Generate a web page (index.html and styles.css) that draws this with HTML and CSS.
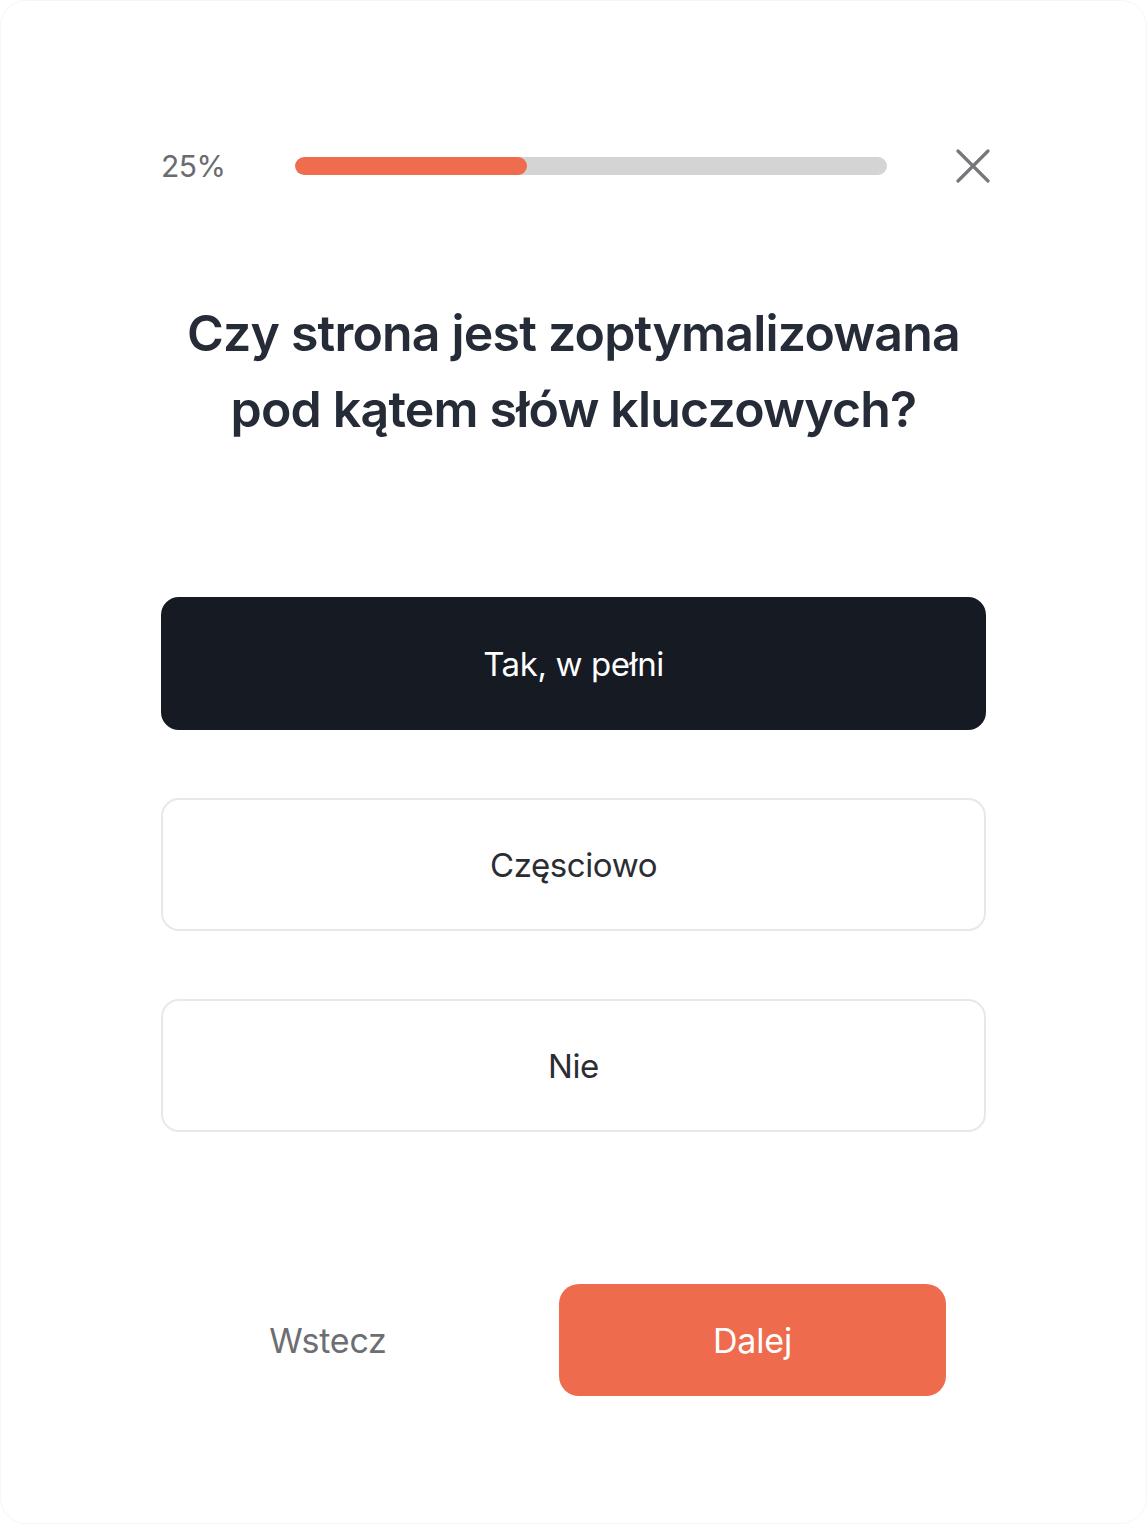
FILE: index.html
```html
<!DOCTYPE html>
<html lang="pl">
<head>
<meta charset="utf-8">
<title>Quiz</title>
<link rel="stylesheet" href="styles.css">
</head>
<body>
<div class="card">
  <div class="progress-row">
    <span class="percent">25%</span>
    <div class="track"><div class="fill" style="width:39.2%"></div></div>
    <button class="close" aria-label="Zamknij">
      <svg width="34" height="34" viewBox="0 0 34 34"><path d="M2 2 L32 32 M32 2 L2 32" stroke="#76777b" stroke-width="3.2" stroke-linecap="round" fill="none"/></svg>
    </button>
  </div>
  <h1 class="question">Czy strona jest zoptymalizowana<br>pod kątem słów kluczowych?</h1>
  <div class="options">
    <button class="option selected">Tak, w pełni</button>
    <button class="option">Częsciowo</button>
    <button class="option">Nie</button>
  </div>
  <div class="nav">
    <button class="back">Wstecz</button>
    <button class="next">Dalej</button>
  </div>
</div>
</body>
</html>
```

FILE: styles.css
```css
html, body {
  margin: 0;
  padding: 0;
  background: #ffffff;
}
body {
  font-family: Inter, "Noto Sans", sans-serif;
}
.card {
  box-sizing: border-box;
  width: 1147px;
  height: 1524px;
  border: 1px solid #f6f6f6;
  border-radius: 26px;
  padding: 0 160px;
  background: #fff;
}
.progress-row {
  display: flex;
  align-items: center;
  height: 36px;
  margin-top: 147px;
}
.percent {
  width: 134px;
  font-size: 30px;
  color: #6a6b6e;
  letter-spacing: -0.5px;
}
.track {
  flex: 0 0 592px;
  height: 18px;
  background: #d4d4d4;
  border-radius: 9px;
  overflow: hidden;
}
.fill {
  height: 100%;
  background: #ef6c4e;
  border-radius: 9px;
}
.close {
  margin-left: auto;
  margin-right: -4px;
  border: 0;
  background: none;
  padding: 0;
  width: 34px;
  height: 34px;
  display: flex;
}
.question {
  margin: 111px 0 0;
  text-align: center;
  font-size: 50px;
  line-height: 76px;
  font-weight: 600;
  color: #262b38;
  letter-spacing: -0.8px;
}
.options {
  display: flex;
  flex-direction: column;
  gap: 68px;
  margin-top: 150px;
}
.option {
  box-sizing: border-box;
  height: 133px;
  width: 100%;
  border: 2px solid #e8e8e8;
  border-radius: 18px;
  background: #fff;
  font-family: Inter, "Noto Sans", sans-serif;
  font-size: 33px;
  color: #2b2d33;
  letter-spacing: -0.4px;
}
.option.selected {
  background: #161a23;
  border-color: #161a23;
  color: #ffffff;
}
.nav {
  display: flex;
  align-items: center;
  gap: 64px;
  margin-top: 152px;
  padding-left: 0;
}
.back {
  width: 334px;
  height: 112px;
  border: 0;
  background: none;
  font-family: Inter, "Noto Sans", sans-serif;
  font-size: 34px;
  color: #6d6e71;
  letter-spacing: -0.2px;
}
.next {
  width: 387px;
  height: 112px;
  border: 0;
  border-radius: 20px;
  background: #ee6c4d;
  font-family: Inter, "Noto Sans", sans-serif;
  font-size: 34px;
  color: #ffffff;
  letter-spacing: -0.2px;
}
```
